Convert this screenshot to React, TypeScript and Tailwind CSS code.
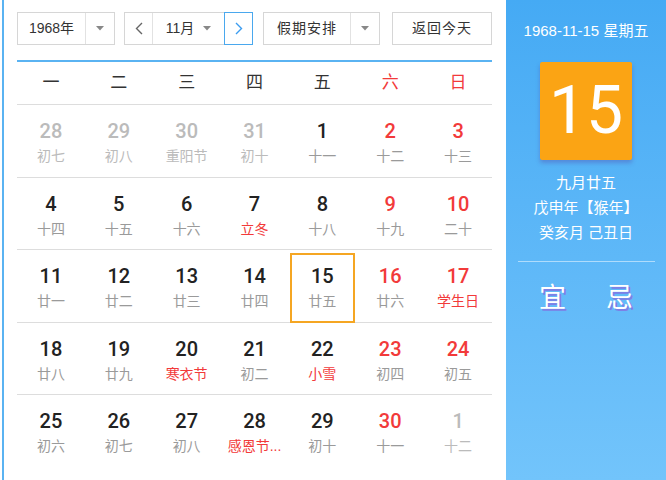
import React from "react";

type Day = {
  num: number;
  lunar: string;
  muted?: boolean;
  weekend?: boolean;
  festival?: boolean;
  today?: boolean;
};

const weekDays = ["一", "二", "三", "四", "五", "六", "日"];

const rows: Day[][] = [
  [
    { num: 28, lunar: "初七", muted: true },
    { num: 29, lunar: "初八", muted: true },
    { num: 30, lunar: "重阳节", muted: true },
    { num: 31, lunar: "初十", muted: true },
    { num: 1, lunar: "十一" },
    { num: 2, lunar: "十二", weekend: true },
    { num: 3, lunar: "十三", weekend: true },
  ],
  [
    { num: 4, lunar: "十四" },
    { num: 5, lunar: "十五" },
    { num: 6, lunar: "十六" },
    { num: 7, lunar: "立冬", festival: true },
    { num: 8, lunar: "十八" },
    { num: 9, lunar: "十九", weekend: true },
    { num: 10, lunar: "二十", weekend: true },
  ],
  [
    { num: 11, lunar: "廿一" },
    { num: 12, lunar: "廿二" },
    { num: 13, lunar: "廿三" },
    { num: 14, lunar: "廿四" },
    { num: 15, lunar: "廿五", today: true },
    { num: 16, lunar: "廿六", weekend: true },
    { num: 17, lunar: "学生日", weekend: true, festival: true },
  ],
  [
    { num: 18, lunar: "廿八" },
    { num: 19, lunar: "廿九" },
    { num: 20, lunar: "寒衣节", festival: true },
    { num: 21, lunar: "初二" },
    { num: 22, lunar: "小雪", festival: true },
    { num: 23, lunar: "初四", weekend: true },
    { num: 24, lunar: "初五", weekend: true },
  ],
  [
    { num: 25, lunar: "初六" },
    { num: 26, lunar: "初七" },
    { num: 27, lunar: "初八" },
    { num: 28, lunar: "感恩节...", festival: true },
    { num: 29, lunar: "初十" },
    { num: 30, lunar: "十一", weekend: true },
    { num: 1, lunar: "十二", muted: true },
  ],
];

const Caret = () => (
  <svg width="8" height="5" viewBox="0 0 8 5">
    <path d="M0 0 L8 0 L4 4.5 Z" fill="#888" />
  </svg>
);

const Chevron = ({ dir, color }: { dir: "left" | "right"; color: string }) => (
  <svg width="8" height="13" viewBox="0 0 8 13">
    <path
      d={dir === "left" ? "M7 1 L1.5 6.5 L7 12" : "M1 1 L6.5 6.5 L1 12"}
      fill="none"
      stroke={color}
      strokeWidth="1.4"
    />
  </svg>
);

function DayCell({ day }: { day: Day }) {
  const numColor = day.muted
    ? "text-[#bbbbbb]"
    : day.weekend
      ? "text-[#f23a3a]"
      : "text-[#222]";
  const lunarColor = day.muted
    ? "text-[#bbbbbb]"
    : day.festival
      ? "text-[#f23a3a]"
      : "text-[#9a9a9a]";

  return (
    <div className="relative flex flex-col items-center">
      {day.today && (
        <div className="absolute left-[2px] right-[1px] top-[3px] bottom-[-1px] border-2 border-[#f5a623]" />
      )}
      <span
        className={`mt-[15px] text-[20px] font-medium leading-[22px] ${numColor}`}
        style={{ fontFamily: 'Roboto, "Liberation Sans", sans-serif' }}
      >
        {day.num}
      </span>
      <span className={`mt-[4px] text-[14px] leading-[20px] ${lunarColor}`}>
        {day.lunar}
      </span>
    </div>
  );
}

export default function App() {
  return (
    <div
      className="flex h-[480px] w-[666px] overflow-hidden bg-white text-[#333]"
      style={{ fontFamily: '"Liberation Sans", "Noto Sans CJK SC", sans-serif' }}
    >
      <div className="ml-[2px] w-[2px] bg-[#5ab3f2]" />

      <div className="flex w-[502px] flex-col pl-[13px] pr-[14px] pt-[12px]">
        {/* toolbar */}
        <div className="flex h-[33px] text-[14px]">
          <div className="flex w-[98px] border border-[#d6d6d6]">
            <div className="flex w-[68px] items-center justify-center border-r border-[#e2e2e2]">
              1968年
            </div>
            <div className="flex flex-1 items-center justify-center">
              <Caret />
            </div>
          </div>

          <div className="ml-[9px] flex w-[129px] border border-[#d6d6d6]">
            <div className="flex w-[28px] items-center justify-center border-r border-[#e2e2e2]">
              <Chevron dir="left" color="#666" />
            </div>
            <div className="flex flex-1 items-center justify-center gap-[9px]">
              <span>11月</span>
              <Caret />
            </div>
            <div className="-my-px -mr-px flex w-[29px] items-center justify-center border border-[#4aa8ee]">
              <Chevron dir="right" color="#3b9cf0" />
            </div>
          </div>

          <div className="ml-[10px] flex w-[117px] border border-[#d6d6d6]">
            <div className="flex w-[87px] items-center justify-center border-r border-[#e2e2e2] tracking-[1px]">
              假期安排
            </div>
            <div className="flex flex-1 items-center justify-center">
              <Caret />
            </div>
          </div>

          <div className="ml-[12px] flex w-[100px] items-center justify-center border border-[#d6d6d6] tracking-[1px]">
            返回今天
          </div>
        </div>

        {/* calendar */}
        <div className="mt-[15px] border-t-2 border-[#5ab3f2]">
          <div className="grid h-[43px] grid-cols-7 items-center border-b border-[#dddddd] text-[17px]">
            {weekDays.map((w, i) => (
              <div
                key={w}
                className={`text-center ${i >= 5 ? "text-[#f23a3a]" : "text-[#333]"}`}
              >
                {w}
              </div>
            ))}
          </div>
          {rows.map((row, r) => (
            <div
              key={r}
              className={`grid h-[72.5px] grid-cols-7 ${r < 4 ? "border-b border-[#dddddd]" : ""}`}
            >
              {row.map((d, i) => (
                <DayCell key={i} day={d} />
              ))}
            </div>
          ))}
        </div>
      </div>

      <div className="flex w-[160px] flex-col items-center bg-gradient-to-b from-[#45aaf4] to-[#72c4fb] text-white">
        <div className="mt-[22px] text-[15px] leading-[18px]">1968-11-15 星期五</div>
        <div className="mt-[22px] flex h-[98px] w-[92px] items-center justify-center rounded-[2px] bg-[#fba414] shadow-[0_3px_4px_rgba(80,60,160,0.35)]">
          <span
            className="text-[66px] font-normal leading-none"
            style={{ fontFamily: 'Roboto, "Liberation Sans", sans-serif' }}
          >
            15
          </span>
        </div>
        <div className="mt-[10px] flex flex-col items-center text-[15px] leading-[25px]">
          <span>九月廿五</span>
          <span>戊申年【猴年】</span>
          <span>癸亥月 己丑日</span>
        </div>
        <div className="mt-[16px] h-px w-[137px] bg-white/50" />
        <div className="mt-[18px] flex w-full justify-between px-[33px] text-[27px] leading-[36px] [text-shadow:2px_2px_0_#7d80e6]">
          <span>宜</span>
          <span>忌</span>
        </div>
      </div>
    </div>
  );
}
